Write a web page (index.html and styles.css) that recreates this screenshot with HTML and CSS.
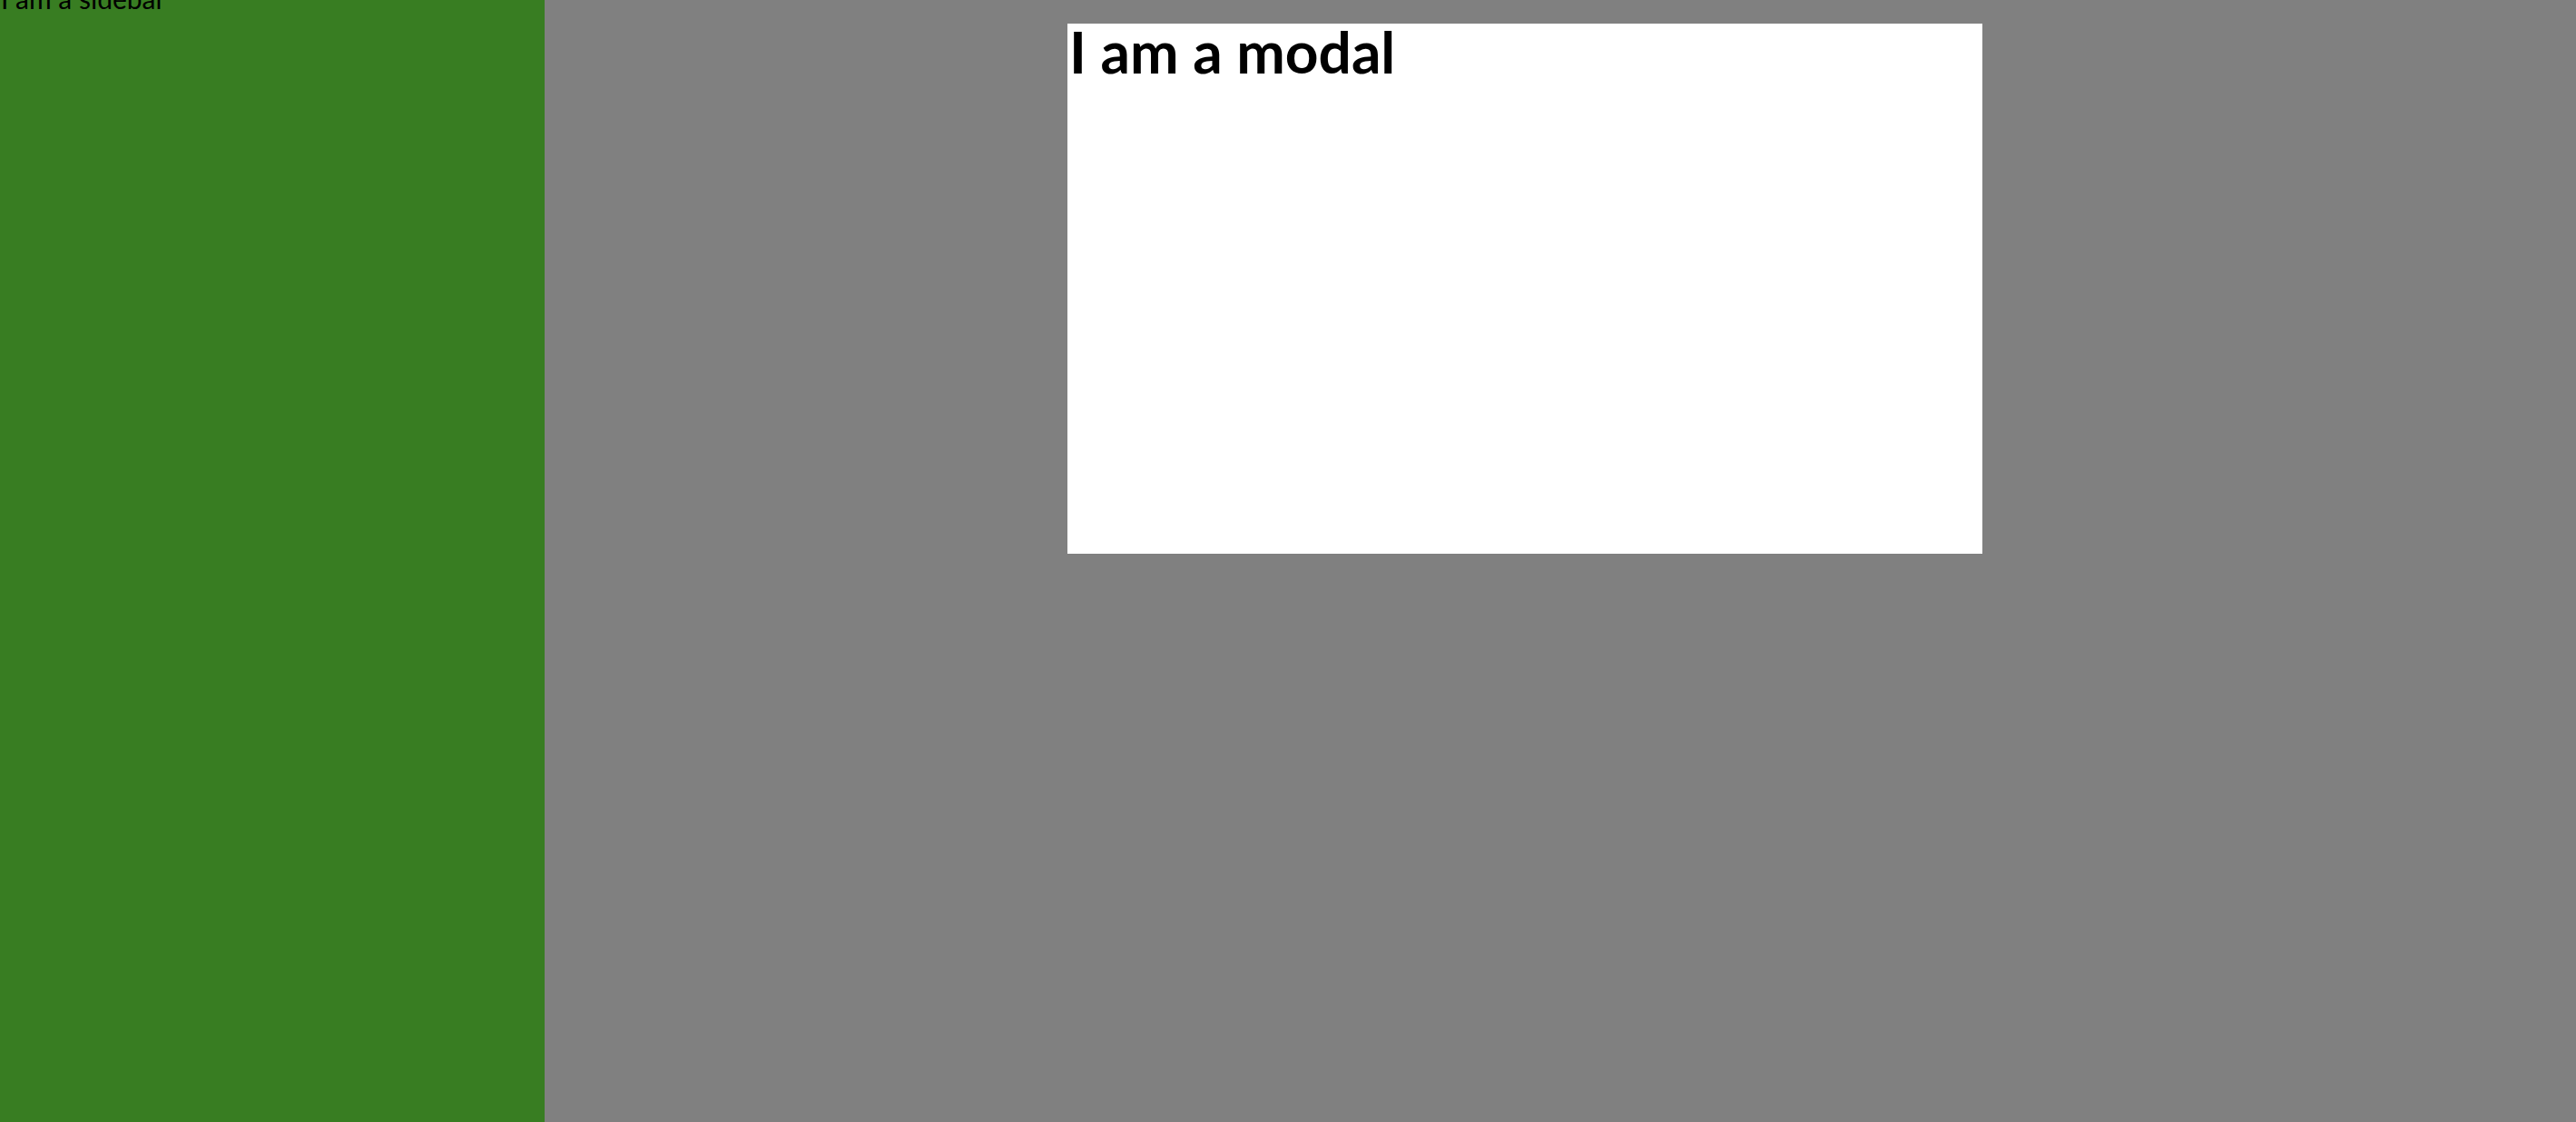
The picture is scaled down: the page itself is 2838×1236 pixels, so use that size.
FILE: index.html
```html
<!DOCTYPE html>
<html>
<head>
<meta charset="utf-8">
<link rel="stylesheet" href="styles.css">
</head>
<body>
<div class="layout">
  <aside class="sidebar"><p class="sidebar-text">I am a sidebar</p></aside>
  <main class="main">
    <div class="modal"><h1 class="modal-title">I am a modal</h1></div>
  </main>
</div>
</body>
</html>
```
FILE: styles.css
```css
html, body {
  margin: 0;
  padding: 0;
  height: 100%;
}
body {
  font-family: "Lato", sans-serif;
  font-size: 32px;
}
.layout {
  display: flex;
  height: 100vh;
  overflow: hidden;
}
.sidebar {
  width: 600px;
  flex: none;
  background: #387d22;
  overflow: hidden;
}
.sidebar-text {
  margin: -20px 0 0 1px;
  font-size: 30px;
  line-height: 36px;
  color: #000;
}
.main {
  flex: 1;
  background: #808080;
  padding-top: 26px;
  padding-left: 576px;
}
.modal {
  width: 1008px;
  height: 584px;
  background: #fff;
}
.modal-title {
  margin: 0;
  padding-left: 2px;
  font-size: 64px;
  font-weight: 700;
  line-height: 62px;
  color: #000;
}
```
